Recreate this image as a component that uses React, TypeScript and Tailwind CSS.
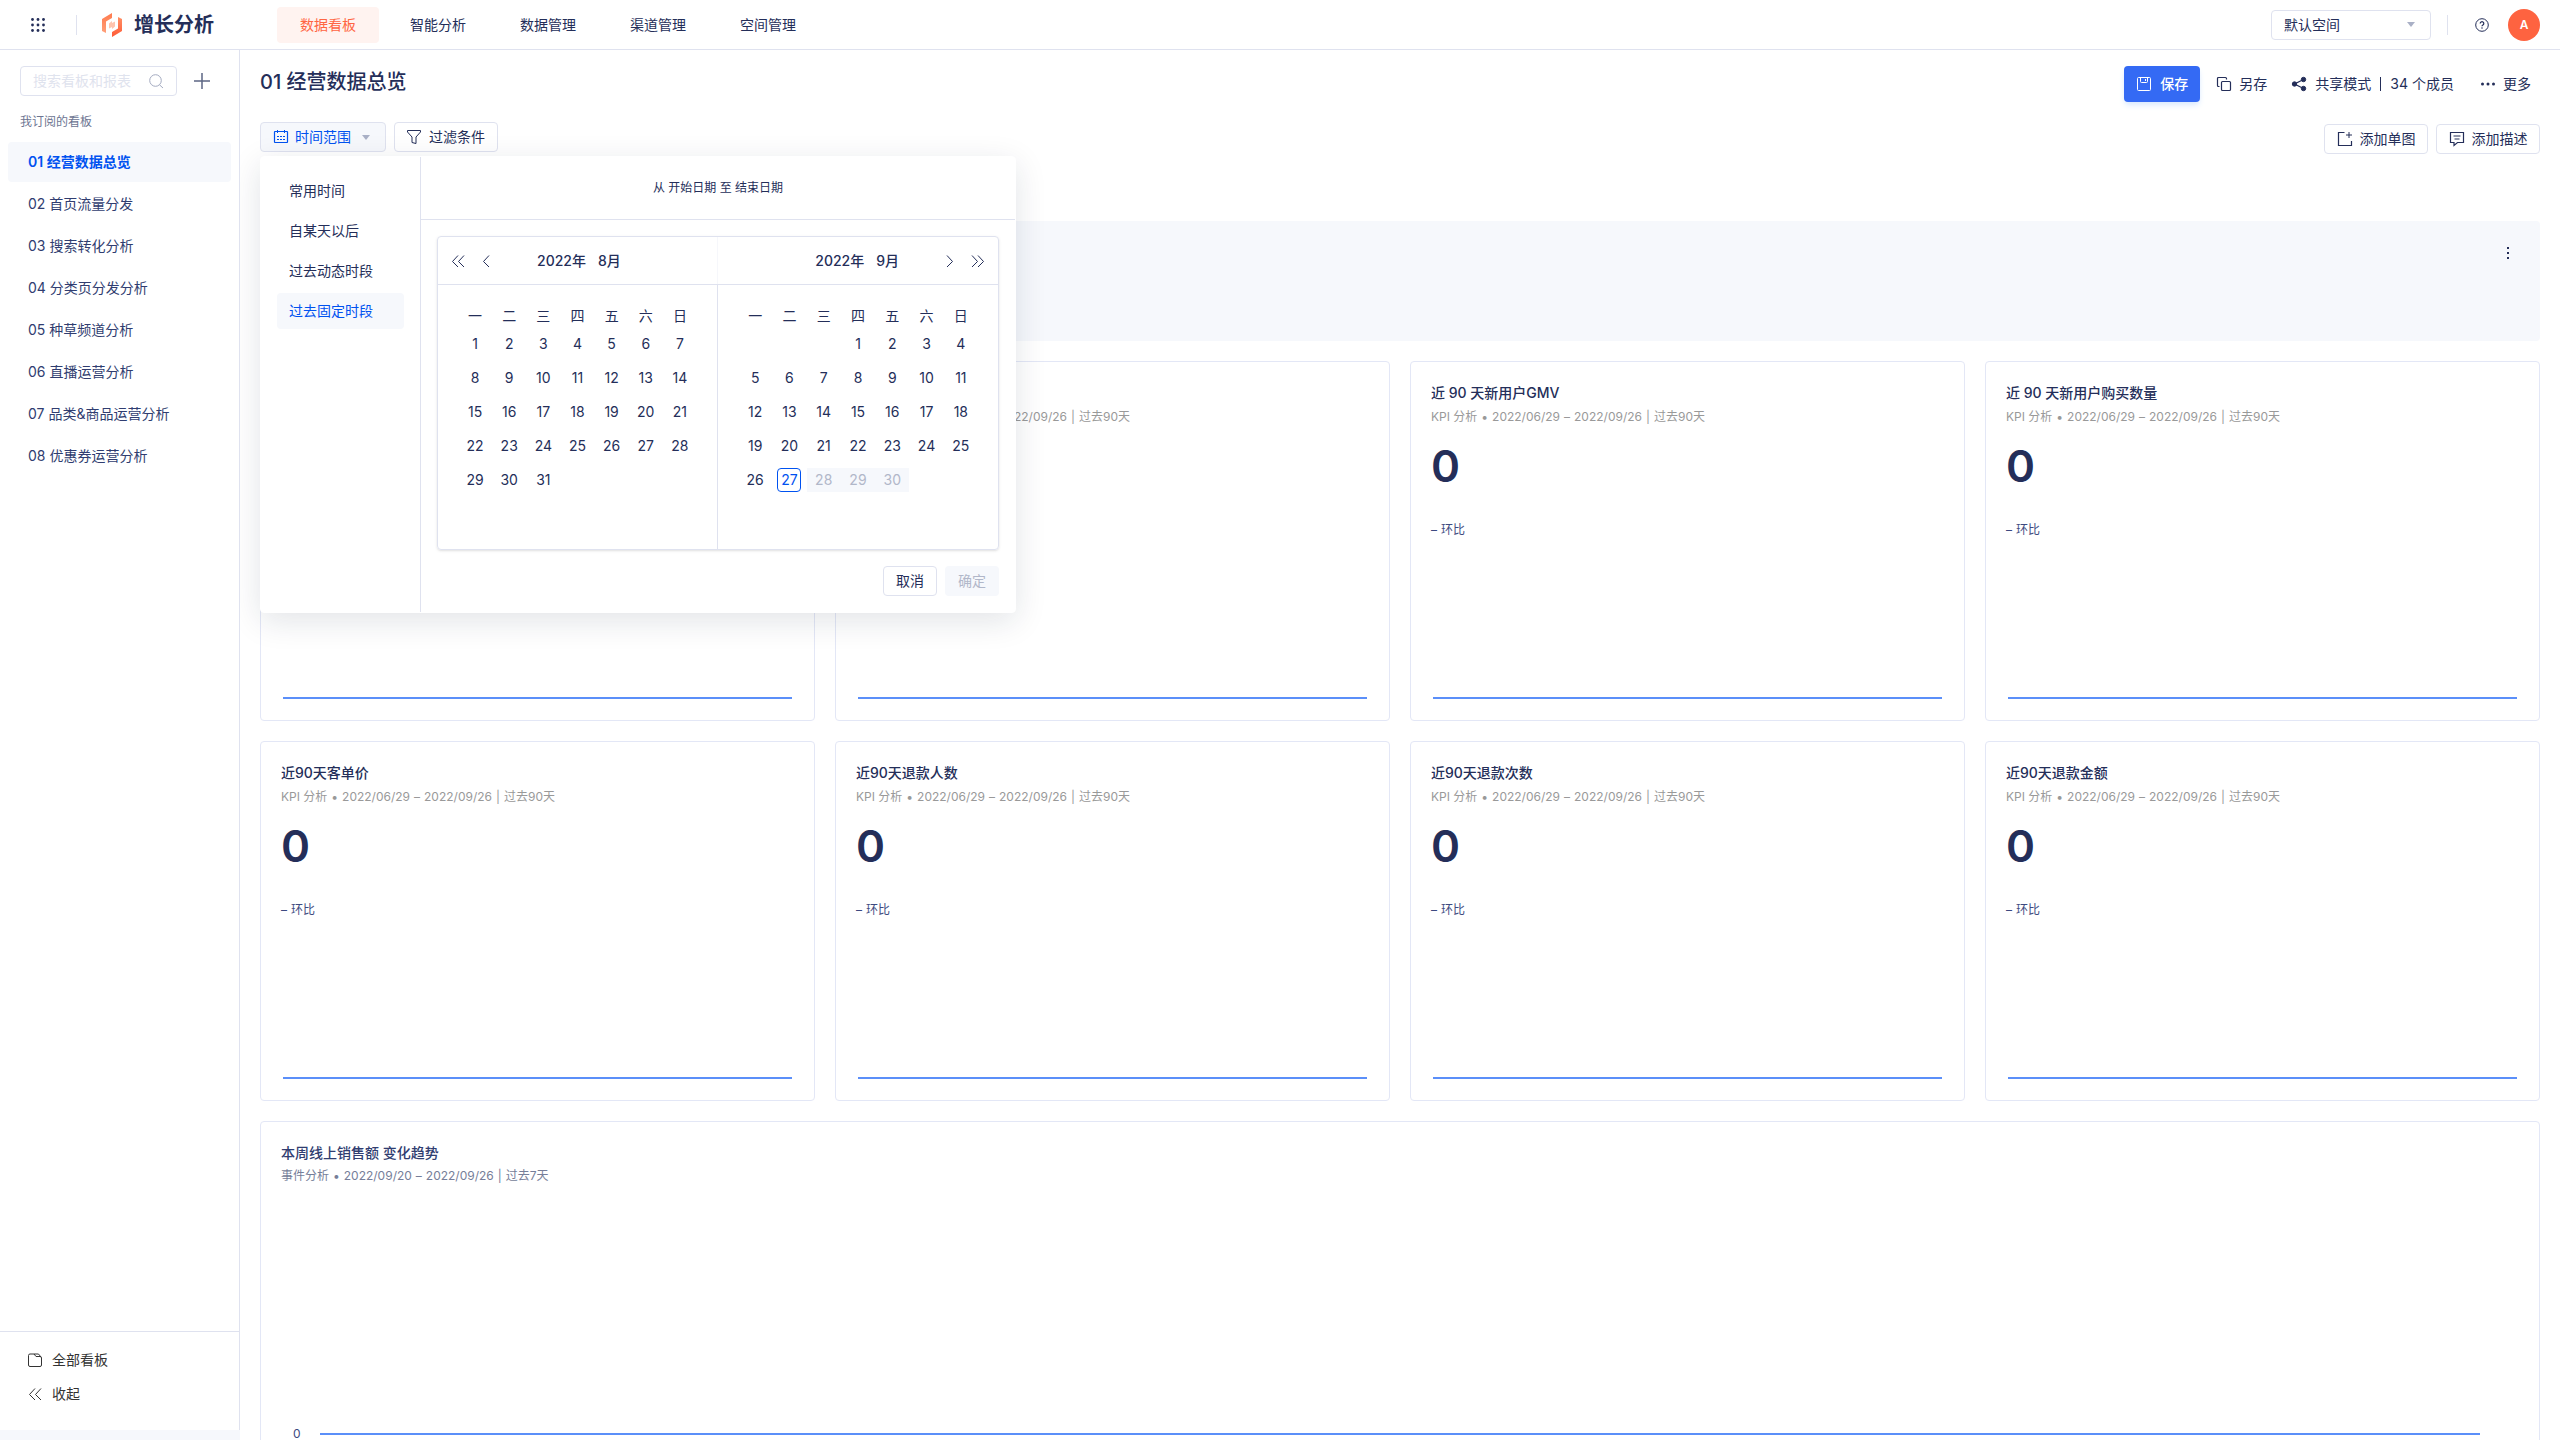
import { useState, type ReactNode } from "react";

const navItems = ["数据看板", "智能分析", "数据管理", "渠道管理", "空间管理"];

const boards = [
  "01 经营数据总览",
  "02 首页流量分发",
  "03 搜索转化分析",
  "04 分类页分发分析",
  "05 种草频道分析",
  "06 直播运营分析",
  "07 品类&商品运营分析",
  "08 优惠券运营分析",
];

interface Kpi {
  id: number;
  title?: string;
  period?: boolean;
}

const kpis: Kpi[] = [
  { id: 1 },
  { id: 2, period: true },
  { id: 3, title: "近 90 天新用户GMV", period: true },
  { id: 4, title: "近 90 天新用户购买数量", period: true },
  { id: 5, title: "近90天客单价", period: true },
  { id: 6, title: "近90天退款人数", period: true },
  { id: 7, title: "近90天退款次数", period: true },
  { id: 8, title: "近90天退款金额", period: true },
];

const rangeTabs = ["常用时间", "自某天以后", "过去动态时段", "过去固定时段"];
const weekdays = ["一", "二", "三", "四", "五", "六", "日"];

function Icon({ children, className = "w-4 h-4" }: { children: ReactNode; className?: string }) {
  return (
    <svg viewBox="0 0 16 16" fill="none" stroke="currentColor" className={`shrink-0 ${className}`} aria-hidden="true">
      {children}
    </svg>
  );
}

function Caret() {
  return (
    <svg viewBox="0 0 8 5" className="w-2 h-[5px] shrink-0 text-[#a9b0c6]" aria-hidden="true">
      <path d="M0 0h8L4 5z" fill="currentColor" />
    </svg>
  );
}

function DoubleLeft() {
  return (
    <Icon>
      <path d="M8 2.5 2.5 8.5 8 14M14 2.5 8.5 8.5 14 14" />
    </Icon>
  );
}

function Logo() {
  return (
    <svg viewBox="0 0 20 24" className="w-5 h-6 ml-[25px]" aria-hidden="true">
      <defs>
        <linearGradient id="logo-left" x1="0" y1="0" x2="0" y2="1">
          <stop offset="0" stopColor="#ff7a4d" />
          <stop offset="1" stopColor="#ffa07a" />
        </linearGradient>
        <linearGradient id="logo-right" x1="0" y1="0" x2="0" y2="1">
          <stop offset="0" stopColor="#ff9066" />
          <stop offset="1" stopColor="#ff5a36" />
        </linearGradient>
      </defs>
      <path d="M10 0v5L4 8.500v11.500l-4-2V6z" fill="url(#logo-left)" />
      <path d="M16 4l4 2v12l-10 6v-5l6-3.500z" fill="url(#logo-right)" />
      <path d="M10 8v2l3-1.500v5L10 16v-2l-3 1.500v-5z" fill="#ffc4ae" />
    </svg>
  );
}

function Header() {
  return (
    <header className="h-[50px] shrink-0 flex items-center border-b border-[#dfe2ef] pl-[30px] pr-5">
      <button aria-label="应用" className="w-4 h-4">
        <svg viewBox="0 0 16 16" fill="currentColor" className="w-4 h-4">
          {[2.5, 8, 13.5].map((y) => [2.5, 8, 13.5].map((x) => <circle key={`${x}-${y}`} cx={x} cy={y} r="1.400" />))}
        </svg>
      </button>
      <div className="w-px h-5 bg-[#dfe2ef] ml-[30px]" />
      <Logo />
      <span className="ml-3 text-[20px] font-bold">增长分析</span>

      <nav className="flex gap-2 ml-[63px]">
        {navItems.map((item, i) => (
          <a
            key={item}
            href="#"
            className={`w-[102px] h-9 rounded flex items-center justify-center text-sm ${
              i === 0 ? "bg-[#fff3f0] text-[#ff6543]" : ""
            }`}
          >
            {item}
          </a>
        ))}
      </nav>

      <div className="ml-auto flex items-center">
        <div className="relative">
          <select
            aria-label="空间"
            className="appearance-none w-40 h-[30px] border border-[#dfe2ef] rounded bg-white pl-3 text-sm"
          >
            <option>默认空间</option>
          </select>
          <div className="absolute right-4 top-0 h-full flex items-center pointer-events-none">
            <Caret />
          </div>
        </div>
        <div className="w-px h-5 bg-[#dfe2ef] ml-4" />
        <button aria-label="帮助" className="ml-[26px]">
          <Icon>
            <circle cx="8" cy="8" r="6.300" />
            <path d="M6.200 6.500a1.800 1.800 0 1 1 2.700 1.600c-.6.35-.9.600-.9 1.200" strokeWidth="1.200" />
            <circle cx="8" cy="11" r=".4" fill="currentColor" strokeWidth=".6" />
          </Icon>
        </button>
        <button className="ml-[18px] w-8 h-8 rounded-full bg-[#fe6340] text-white text-xs font-semibold">A</button>
      </div>
    </header>
  );
}

function Sidebar() {
  return (
    <aside className="w-60 shrink-0 flex flex-col">
      <div className="flex-1 flex flex-col border-r border-[#dfe2ef]">
        <div className="flex items-center pl-5 pt-4">
          <label className="w-[157px] h-[30px] flex items-center border border-[#dfe2ef] rounded px-3">
            <input
              aria-label="搜索"
              placeholder="搜索看板和报表"
              className="w-0 flex-1 text-sm outline-none placeholder:text-[#dfe3ee]"
            />
            <Icon className="w-4 h-4 text-[#a4abc1]">
              <circle cx="7.500" cy="7.500" r="5.800" />
              <path d="m11.500 11.800 3.500 3.200" />
            </Icon>
          </label>
          <button aria-label="新建" className="ml-[17px] text-[#5c6684]">
            <Icon>
              <path d="M8 0v16M0 8h16" strokeWidth="1.500" />
            </Icon>
          </button>
        </div>

        <div className="pl-5 mt-[17px] text-xs leading-[18px] text-[#6d7592]">我订阅的看板</div>

        <ul className="mt-[11px] px-2 flex flex-col gap-[2px]">
          {boards.map((b, i) => (
            <li key={b}>
              <a
                href="#"
                className={`h-10 pl-5 rounded flex items-center text-sm ${
                  i === 0 ? "bg-[#f6f8fc] text-[#0052f0] font-semibold" : "text-[#303d70]"
                }`}
              >
                {b}
              </a>
            </li>
          ))}
        </ul>

        <div className="mt-auto h-[99px] border-t border-[#dfe2ef] pt-[11px] pl-[27px] flex flex-col text-sm text-[#333333]">
          <button className="h-[34px] flex items-center gap-[9px]">
            <Icon>
              <path d="M1.500 3.500a1.500 1.500 0 0 1 1.500-1.500h4l2 2.500h4a1.500 1.500 0 0 1 1.500 1.500v7a1.500 1.500 0 0 1-1.500 1.500h-10a1.500 1.500 0 0 1-1.500-1.500zM7 2h4.500l2.500 3" />
            </Icon>
            全部看板
          </button>
          <button className="h-[34px] flex items-center gap-[9px]">
            <DoubleLeft />
            收起
          </button>
        </div>
      </div>
      <div className="h-[10px] bg-[#f6f8fc]" />
    </aside>
  );
}

interface MonthProps {
  offset: number;
  days: number;
  today?: number;
}

function MonthTable({ offset, days, today }: MonthProps) {
  const cells = Array.from({ length: 35 }, (_, i) => {
    const d = i - offset + 1;
    return d > 0 && d <= days ? d : null;
  });
  const rows = [0, 1, 2, 3, 4].map((r) => cells.slice(r * 7, r * 7 + 7));

  return (
    <div className="px-5 pt-5 pb-[52px]">
      <table className="w-full table-fixed text-sm text-center">
        <thead>
          <tr className="h-[22px]">
            {weekdays.map((w) => (
              <th key={w} className="p-0 font-normal">
                {w}
              </th>
            ))}
          </tr>
        </thead>
        <tbody>
          {rows.map((row, r) => (
            <tr key={r} className="h-[34px]">
              {row.map((d, i) => {
                const disabled = !!today && !!d && d > today;
                return (
                  <td key={i} className="p-0">
                    {d && (
                      <button
                        disabled={disabled}
                        className={`h-6 block mx-auto ${
                          disabled
                            ? "w-full bg-[#f6f8fc] text-[#b1b7c9]"
                            : d === today
                              ? "w-6 border border-[#0052f0] rounded text-[#0052f0]"
                              : "w-6"
                        }`}
                      >
                        {d}
                      </button>
                    )}
                  </td>
                );
              })}
            </tr>
          ))}
        </tbody>
      </table>
    </div>
  );
}

function DatePanel({ onClose }: { onClose: () => void }) {
  const [tab, setTab] = useState(3);

  return (
    <div className="absolute left-0 top-[34px] z-10 w-[756px] flex bg-white rounded border border-white shadow-[0_8px_32px_rgba(20,30,60,0.12)] text-[#242e59]">
      <div className="w-40 shrink-0 border-r border-[#dfe2ef] p-4 flex flex-col gap-1">
        {rangeTabs.map((t, i) => (
          <button
            key={t}
            onClick={() => setTab(i)}
            className={`h-9 px-3 rounded text-left text-sm ${i === tab ? "bg-[#f6f8fc] text-[#0052f0]" : ""}`}
          >
            {t}
          </button>
        ))}
      </div>
      <div className="flex-1">
        <div className="h-[63px] border-b border-[#dfe2ef] flex items-center justify-center text-xs">
          从 开始日期 至 结束日期
        </div>
        <div className="p-4">
          <div className="border border-[#dfe2ef] rounded shadow-sm">
            <div className="h-12 grid grid-cols-2 border-b border-[#dfe2ef] text-sm font-medium">
              <div className="flex items-center pl-3 border-r border-[#f6f7fb]">
                <button aria-label="上一年">
                  <DoubleLeft />
                </button>
                <button aria-label="上个月" className="ml-3">
                  <Icon>
                    <path d="M11 2.500 5.500 8.500 11 14" />
                  </Icon>
                </button>
                <span className="ml-[43px]">2022年</span>
                <span className="ml-3">8月</span>
              </div>
              <div className="flex items-center justify-end pr-3">
                <span>2022年</span>
                <span className="ml-3">9月</span>
                <button aria-label="下个月" className="ml-[43px]">
                  <Icon>
                    <path d="M5 2.500 10.500 8.500 5 14" />
                  </Icon>
                </button>
                <button aria-label="下一年" className="ml-3">
                  <Icon>
                    <path d="M2 2.500 7.500 8.500 2 14M8 2.500 13.500 8.500 8 14" />
                  </Icon>
                </button>
              </div>
            </div>
            <div className="grid grid-cols-2 divide-x divide-[#dfe2ef]">
              <MonthTable offset={0} days={31} />
              <MonthTable offset={3} days={30} today={27} />
            </div>
          </div>
          <div className="flex justify-end gap-2 mt-4 text-sm">
            <button onClick={onClose} className="w-[54px] h-[30px] border border-[#dfe2ef] rounded">
              取消
            </button>
            <button disabled className="w-[54px] h-[30px] rounded bg-[#f6f8fc] text-[#b1b7c9]">
              确定
            </button>
          </div>
        </div>
      </div>
    </div>
  );
}

interface PeriodProps {
  kind: string;
  from: string;
  to: string;
  label: string;
}

function Period({ kind, from, to, label }: PeriodProps) {
  return (
    <p className="flex gap-1 text-xs leading-6">
      <span>{kind}</span>
      <span>•</span>
      <span>{from}</span>
      <span>–</span>
      <span>{to}</span>
      <span>|</span>
      <span>{label}</span>
    </p>
  );
}

function KpiCard({ title, period }: Kpi) {
  return (
    <article className="h-[360px] border border-[#e3e7f6] rounded px-5 pt-[19px] pb-[21px] flex flex-col">
      <h3 className="h-6 text-sm leading-6 font-medium">{title}</h3>
      <div className="text-[#999999]">
        {period && <Period kind="KPI 分析" from="2022/06/29" to="2022/09/26" label="过去90天" />}
      </div>
      {title && (
        <>
          <p className="mt-[15px] text-[44px] leading-[44px] font-semibold">0</p>
          <p className="mt-[30px] flex gap-1 text-xs leading-6 text-[#3d4a80]">
            <span>–</span>
            <span>环比</span>
          </p>
        </>
      )}
      <div className="mt-auto mx-[2px] h-[2px] bg-[#5b8ff9]" />
    </article>
  );
}

export default function App() {
  const [open, setOpen] = useState(true);

  return (
    <div className="h-screen flex flex-col overflow-hidden bg-white text-[#242e59] font-[Inter,'Noto_Sans_CJK_SC',sans-serif]">
      <Header />
      <div className="flex-1 min-h-0 flex">
        <Sidebar />
        <main className="flex-1 min-w-0 px-5 overflow-hidden">
          <div className="flex items-start justify-between pt-4">
            <h1 className="text-[20px] leading-8 font-medium">01 经营数据总览</h1>
            <div className="flex items-center h-9 text-sm pr-[9px]">
              <button className="h-9 w-[76px] flex items-center justify-center gap-2 rounded bg-[#346af4] text-white font-medium shadow-md shadow-blue-100">
                <Icon>
                  <rect x="1.500" y="1.500" width="13" height="13" rx="1" />
                  <path d="M4.500 1.500v4a1 1 0 0 0 1 1h5a1 1 0 0 0 1-1v-4M9.500 3v2" />
                </Icon>
                保存
              </button>
              <button className="ml-4 flex items-center gap-[7px]">
                <Icon>
                  <rect x="5.500" y="5.500" width="9" height="9" rx="1" strokeWidth="1.200" />
                  <path d="M3.500 10.500h-1a1 1 0 0 1-1-1v-7a1 1 0 0 1 1-1h7a1 1 0 0 1 1 1v1" strokeWidth="1.200" />
                </Icon>
                另存
              </button>
              <button className="ml-6 flex items-center">
                <Icon>
                  <g fill="currentColor">
                    <circle cx="3.500" cy="8" r="2.200" />
                    <circle cx="12.500" cy="3.500" r="2.200" />
                    <circle cx="12.500" cy="12.500" r="2.200" />
                  </g>
                  <path d="M12.500 3.500 3.500 8l9 4.500" strokeWidth="1.300" />
                </Icon>
                <span className="ml-2">共享模式</span>
                <span className="w-px h-[14px] bg-[#242e59] mx-[9px]" />
                34 个成员
              </button>
              <button className="ml-[26px] flex items-center gap-[7px]">
                <Icon>
                  <g fill="currentColor" stroke="none">
                    <circle cx="2.500" cy="8" r="1.500" />
                    <circle cx="8" cy="8" r="1.500" />
                    <circle cx="13.500" cy="8" r="1.500" />
                  </g>
                </Icon>
                更多
              </button>
            </div>
          </div>

          <div className="flex items-center justify-between h-8 mt-5 text-sm">
            <div className="relative flex gap-2 self-start">
              <button
                onClick={() => setOpen(!open)}
                className="w-[126px] h-[30px] pl-3 flex items-center rounded border border-[#dfe2ef] bg-[#f6f8fc] text-[#0052f0]"
              >
                <Icon className="w-4 h-4 mr-[6px]">
                  <rect x="1.500" y="2.500" width="13" height="11" rx=".5" strokeWidth="1.200" />
                  <path d="M4.500 1v3M11.500 1v3" />
                  <path d="M4 7.500h8M4 10.500h8" strokeDasharray="2 1" />
                </Icon>
                时间范围
                <span className="ml-[11px]">
                  <Caret />
                </span>
              </button>
              <button className="w-[104px] h-[30px] pl-[11px] flex items-center gap-[7px] rounded border border-[#dfe2ef]">
                <Icon>
                  <path d="M1.500 1.500h13v1.500L10 8v6.500l-4-1V8L1.500 3z" />
                </Icon>
                过滤条件
              </button>
              {open && <DatePanel onClose={() => setOpen(false)} />}
            </div>
            <div className="flex gap-2 self-end">
              <button className="w-[104px] h-[30px] flex items-center justify-center gap-[7px] rounded border border-[#dfe2ef]">
                <Icon>
                  <path d="M7.500 1.500h-6v13h13V10" strokeWidth="1.200" />
                  <path d="M12 1v6M9 4h6" />
                </Icon>
                添加单图
              </button>
              <button className="w-[104px] h-[30px] flex items-center justify-center gap-[7px] rounded border border-[#dfe2ef]">
                <Icon>
                  <path d="M1.500 1.500h13v10H8.500L5 14.500v-3H1.500z" strokeWidth="1.200" />
                  <path d="M4.500 5h7M5.500 8h5" />
                </Icon>
                添加描述
              </button>
            </div>
          </div>

          <section className="mt-[67px] h-[120px] rounded bg-[#f6f8fc] flex items-start justify-end p-6">
            <button aria-label="更多操作">
              <Icon>
                <g fill="currentColor" stroke="none">
                  <rect x="7" y="2" width="2" height="2" />
                  <rect x="7" y="7" width="2" height="2" />
                  <rect x="7" y="12" width="2" height="2" />
                </g>
              </Icon>
            </button>
          </section>

          <section className="mt-5 grid grid-cols-4 gap-5">
            {kpis.map((k) => (
              <KpiCard key={k.id} {...k} />
            ))}
          </section>

          <article className="mt-5 h-[360px] border border-[#e3e7f6] rounded px-5 pt-5">
            <h3 className="text-sm leading-[22px] font-medium text-[#303d70]">本周线上销售额 变化趋势</h3>
            <div className="text-[#767e99]">
              <Period kind="事件分析" from="2022/09/20" to="2022/09/26" label="过去7天" />
            </div>
            <div className="mt-[238px] ml-3 mr-[39px] flex items-center gap-[19px]">
              <span className="text-xs leading-4 text-[#3d4a80]">0</span>
              <div className="flex-1 h-[2px] bg-[#5b8ff9]" />
            </div>
          </article>
        </main>
      </div>
    </div>
  );
}
